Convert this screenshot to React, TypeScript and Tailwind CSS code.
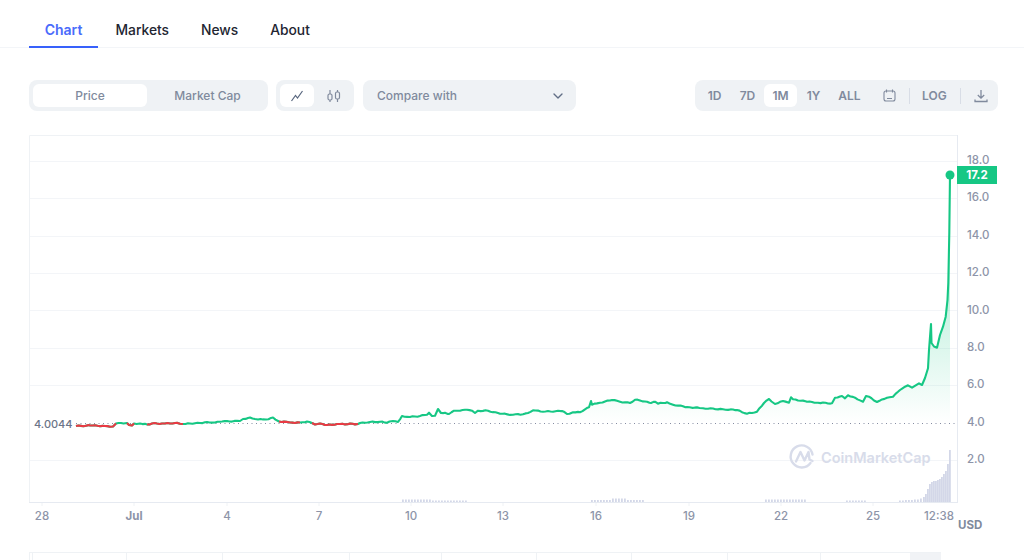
import { ChevronDown } from "lucide-react";

const tabs = ["Chart", "Markets", "News", "About"];
const ranges = ["1D", "7D", "1M", "1Y", "ALL"];

const gridLines = [161, 198, 236, 273, 310, 348, 385, 460];
const yLabels = ["18.0", "16.0", "14.0", "12.0", "10.0", "8.0", "6.0", "4.0", "2.0"];
const yLabelPos = [160, 197, 235, 272, 310, 347, 384, 422, 459];
const xLabels: [string, number][] = [
  ["28", 42],
  ["Jul", 134],
  ["4", 227],
  ["7", 319],
  ["10", 411],
  ["13", 503],
  ["16", 596],
  ["19", 689],
  ["22", 781],
  ["25", 873],
  ["12:38", 939],
];

// page coordinates, the svg viewBox starts at y=125
const anchors: [number, number][] = [
  [76, 426], [90, 425.5], [105, 426], [113, 426.5], [116, 423.5], [127, 423], [129, 425], [132, 425.5],
  [134, 423.5], [140, 423.5], [147, 424.5], [152, 423.5], [165, 423.5], [175, 423], [183, 424], [190, 423.5],
  [200, 423], [207, 422], [215, 422.5], [222, 421.5], [240, 421], [243, 419], [250, 417.5], [258, 419.5],
  [266, 419.5], [273, 417.5], [279, 421.5], [290, 422.5], [300, 422.5], [307, 421.5], [312, 423], [315, 424.5],
  [320, 423.5], [327, 425], [340, 424], [358, 424], [360, 423], [370, 422], [380, 421.7], [387, 422.7],
  [393, 421], [398, 422], [402, 416], [410, 417], [420, 416], [427, 414.7], [429, 412.7], [432, 416],
  [435, 415.7], [438, 409], [441, 413], [445, 412.7], [449, 414], [454, 410.7], [460, 410.7], [467, 409.7],
  [472, 410.7], [475, 413], [478, 410.7], [488, 410.7], [500, 413.7], [513, 414.7], [523, 414.3], [528, 413],
  [533, 410.3], [543, 411.7], [562, 411], [567, 414], [573, 412.3], [580, 412.3], [585, 409.3], [589, 407.3],
  [591, 401], [592, 404.7], [600, 402.7], [612, 400], [620, 401.7], [630, 403], [635, 399.7], [647, 401.7],
  [651, 403], [655, 401.7], [658, 403.7], [667, 402.3], [673, 404.7], [687, 407], [703, 408.3], [723, 409.3],
  [737, 410], [747, 413.7], [757, 411.7], [764, 403], [769, 399], [775, 404], [783, 401], [789, 402.7],
  [791, 397.3], [793, 399.3], [807, 401.7], [818, 402.7], [832, 403.3], [835, 397.7], [842, 396], [845, 398.3],
  [848, 395.3], [855, 397.7], [863, 401.7], [866, 396], [869, 396.7], [877, 402], [887, 397.7], [893, 396.7],
  [900, 390], [908, 385.3], [912, 387.7], [919, 383.3], [922, 385], [925, 378], [928, 368.3], [929, 350], [931, 324],
  [931.5, 343], [934, 346.5], [937, 347.7], [940, 335], [943, 326.7], [945.7, 316.7], [947.5, 300], [948.3, 283],
  [949.3, 233], [950, 175],
];

// fill long straight runs with a little wobble so the line reads as price data
const price: [number, number][] = anchors.flatMap(([x, y], i): [number, number][] => {
  const next = anchors[i + 1];
  if (!next || x > 900 || next[0] - x < 4) return [[x, y]];
  const out: [number, number][] = [[x, y]];
  for (let px = x + 2.5; px < next[0] - 1; px += 2.5) {
    const t = (px - x) / (next[0] - x);
    out.push([px, y + (next[1] - y) * t + Math.sin(px * 1.9) * 0.45]);
  }
  return out;
});

const redRanges: [number, number][] = [[76, 116], [127, 134], [147, 183], [279, 300], [312, 358]];

const toPoints = (pts: [number, number][]) => pts.map(([x, y]) => `${x},${y}`).join(" ");

const areaPoints = toPoints([[402, 423], ...price.filter(([x]) => x >= 402), [950, 423]]);

// volume bars along the bottom of the plot
const volume: [number, number][] = [
  ...[402, 405, 408, 411, 414, 417, 420, 423, 426, 429, 432, 435, 438, 441, 444, 447, 450, 453, 456, 459, 462, 465].map(
    (x, i): [number, number] => [x, i < 10 ? 2.5 : 1.5],
  ),
  ...[591, 594, 597, 600, 603, 606, 609, 612, 615, 618, 621, 624, 627, 630, 633, 636, 639, 642].map(
    (x, i): [number, number] => [x, i > 6 && i < 12 ? 3.5 : 2],
  ),
  ...[765, 768, 771, 774, 777, 780, 783, 786, 789, 792, 795, 798, 801, 804].map((x): [number, number] => [x, 2.5]),
  ...[846, 849, 852, 855, 858, 861, 864].map((x): [number, number] => [x, 1.5]),
  [899, 1.5], [902, 1.5], [905, 2], [908, 2], [911, 2], [914, 2.5], [917, 2.5], [920, 3.5], [923, 5],
  [925, 8], [927, 13], [929, 18], [931, 20], [933, 21], [935, 21], [937, 22], [939, 23], [941, 25],
  [943, 28], [945, 31], [947, 38], [949, 52],
];

const footerCells = [94, 96, 127, 92, 95, 95, 96, 93, 90];

function LineIcon() {
  return (
    <svg width="14" height="14" viewBox="0 0 14 14" fill="none" stroke="#58667e" strokeWidth="1.2">
      <path d="M1.5 12 5.5 6.5 7.5 9 12.5 2" />
    </svg>
  );
}

function CandleIcon() {
  return (
    <svg width="14" height="14" viewBox="0 0 14 14" fill="none" stroke="#808a9d" strokeWidth="1.2">
      <rect x="1" y="5" width="4" height="6" rx="1.5" />
      <path d="M3 1v4M3 11v2" />
      <rect x="8.5" y="3" width="4" height="7" rx="1.5" />
      <path d="M10.5 1v2M10.5 10v3" />
    </svg>
  );
}

function CalendarIcon() {
  return (
    <svg width="13" height="13" viewBox="0 0 13 13" fill="none" stroke="#808a9d" strokeWidth="1.1">
      <rect x="1" y="2" width="11" height="10" rx="2" />
      <path d="M3.5 0.5v3M9.5 0.5v3M4 9.5h5" />
    </svg>
  );
}

function DownloadIcon() {
  return (
    <svg width="14" height="14" viewBox="0 0 14 14" fill="none" stroke="#808a9d" strokeWidth="1.3">
      <path d="M7 1v8M3.8 6 7 9.2 10.2 6M1 10.5v2h12v-2" />
    </svg>
  );
}

function Chart() {
  return (
    <svg
      className="mt-[14px] block"
      width="1024"
      height="410"
      viewBox="0 125 1024 410"
      fontFamily="Inter, sans-serif"
    >
      <defs>
        <linearGradient id="area" gradientUnits="userSpaceOnUse" x1="0" y1="300" x2="0" y2="423">
          <stop offset="0" stopColor="#16c784" stopOpacity="0.24" />
          <stop offset="1" stopColor="#16c784" stopOpacity="0" />
        </linearGradient>
      </defs>

      <path d="M29.5 502V135.5H957.5V502" fill="none" stroke="#eff2f5" />
      {gridLines.map((y) => (
        <line key={y} x1="30" x2="957" y1={y + 0.5} y2={y + 0.5} stroke="#f3f5f8" />
      ))}
      <line x1="29" x2="958" y1="502.5" y2="502.5" stroke="#e6eaf1" />
      <line x1="957.5" x2="957.5" y1="135" y2="503" stroke="#e6eaf1" />

      {xLabels.slice(0, 10).map(([label, x]) => (
        <line key={label} x1={x} x2={x} y1="503" y2="506" stroke="#eff2f5" />
      ))}

      {volume.map(([x, h]) => (
        <rect key={x} x={x} y={502 - h} width="1.8" height={h} fill="#d3d7e8" />
      ))}

      <polygon points={areaPoints} fill="url(#area)" />
      <line x1="76" x2="957" y1="423.5" y2="423.5" stroke="#858ca2" strokeDasharray="1 3.5" />

      <polyline points={toPoints(price)} fill="none" stroke="#16c784" strokeWidth="2.1" strokeLinejoin="round" />
      {redRanges.map(([from, to]) => (
        <polyline
          key={from}
          points={toPoints(price.filter(([x]) => x >= from && x <= to))}
          fill="none"
          stroke="#ea3943"
          strokeWidth="2.1"
          strokeLinejoin="round"
        />
      ))}
      <circle cx="950" cy="175" r="4.5" fill="#16c784" />

      <g fill="none" stroke="#d8dcea" strokeWidth="2.4" strokeLinecap="round" strokeLinejoin="round">
        <path d="M810.5 463a11 11 0 1 1 2-8.5" />
        <path d="M796 461.5 800.5 452 804.5 460.5 808.5 452 809.5 459.5 812.5 461" />
      </g>
      <text x="821" y="463" fontSize="14.5" fontWeight="600" fill="#d8dcea">
        CoinMarketCap
      </text>

      {yLabels.map((label, i) => (
        <text key={label} x="967" y={yLabelPos[i] + 4} fontSize="11.5" fontWeight="500" fill="#8d94a8">
          {label}
        </text>
      ))}
      <rect x="957" y="166" width="40" height="18" fill="#16c784" />
      <text x="977" y="179" fontSize="11.5" fontWeight="700" fill="#ffffff" textAnchor="middle">
        17.2
      </text>

      <text x="34" y="428" fontSize="11" fontWeight="500" fill="#6b7488">
        4.0044
      </text>

      {xLabels.map(([label, x]) => (
        <text
          key={label}
          x={x}
          y="520"
          fontSize="11.5"
          fontWeight={label === "Jul" ? 700 : 500}
          fill="#8d94a8"
          textAnchor="middle"
        >
          {label}
        </text>
      ))}
      <text x="958" y="529" fontSize="11.5" fontWeight="700" fill="#808a9d">
        USD
      </text>
    </svg>
  );
}

export default function App() {
  return (
    <div className="h-[560px] w-[1024px] overflow-hidden bg-white font-['Inter',sans-serif]">
      <nav className="flex h-[48px] items-end border-b border-[#f3f5f8] pl-[29px]">
        {tabs.map((tab, i) => (
          <div
            key={tab}
            className={
              i === 0
                ? "-mb-px mr-[1.5px] flex h-[47px] w-[69px] items-center justify-center border-b-2 border-[#3861fb] pt-[12px] text-sm font-semibold text-[#4a6bfb]"
                : "flex h-[47px] items-center px-[16px] pt-[13px] text-[13.8px] font-medium text-[#222531]"
            }
          >
            {tab}
          </div>
        ))}
      </nav>

      <div className="mt-[32px] flex h-[31px] pl-[29px] pr-[26px] text-xs font-medium text-[#808a9d]">
        <div className="flex w-[239px] items-center rounded-lg bg-[#eff2f5] p-1">
          <div className="flex h-[23px] w-[114px] items-center justify-center rounded-md bg-white">Price</div>
          <div className="flex-1 pl-[4px] text-center">Market Cap</div>
        </div>
        <div className="ml-2 flex w-[78px] items-center rounded-lg bg-[#eff2f5] p-1">
          <div className="flex h-[23px] w-[34px] items-center justify-center rounded-md bg-white">
            <LineIcon />
          </div>
          <div className="flex flex-1 justify-center pl-1">
            <CandleIcon />
          </div>
        </div>
        <div className="ml-[9px] flex w-[213px] items-center justify-between rounded-lg bg-[#eff2f5] pl-[14px] pr-[10px]">
          <span>Compare with</span>
          <ChevronDown size={16} color="#616e85" />
        </div>

        <div className="ml-auto flex w-[303px] items-center rounded-lg bg-[#eff2f5] pl-[3px] font-semibold">
          {ranges.map((range) => (
            <div
              key={range}
              className={
                range === "1M"
                  ? "flex h-[23px] w-[33px] items-center justify-center rounded-md bg-white"
                  : range === "ALL"
                    ? "ml-[3px] flex h-[23px] w-[33px] items-center justify-center"
                    : "flex h-[23px] w-[33px] items-center justify-center"
              }
            >
              {range}
            </div>
          ))}
          <div className="ml-[17px]">
            <CalendarIcon />
          </div>
          <div className="ml-[13px] h-[16px] w-px bg-[#d8dde6]" />
          <div className="ml-[12px]">LOG</div>
          <div className="ml-[13px] h-[16px] w-px bg-[#d8dde6]" />
          <div className="ml-[13px]">
            <DownloadIcon />
          </div>
        </div>
      </div>

      <Chart />

      <div className="ml-[29px] mt-[17px] flex h-[20px] w-[912px] border-l border-t border-[#eff2f5] pl-[2px]">
        {footerCells.map((w, i) => (
          <div key={i} style={{ width: w }} className="border-l border-[#eff2f5]" />
        ))}
        <div className="flex-1 bg-[#f1f3f6]" />
      </div>
    </div>
  );
}
